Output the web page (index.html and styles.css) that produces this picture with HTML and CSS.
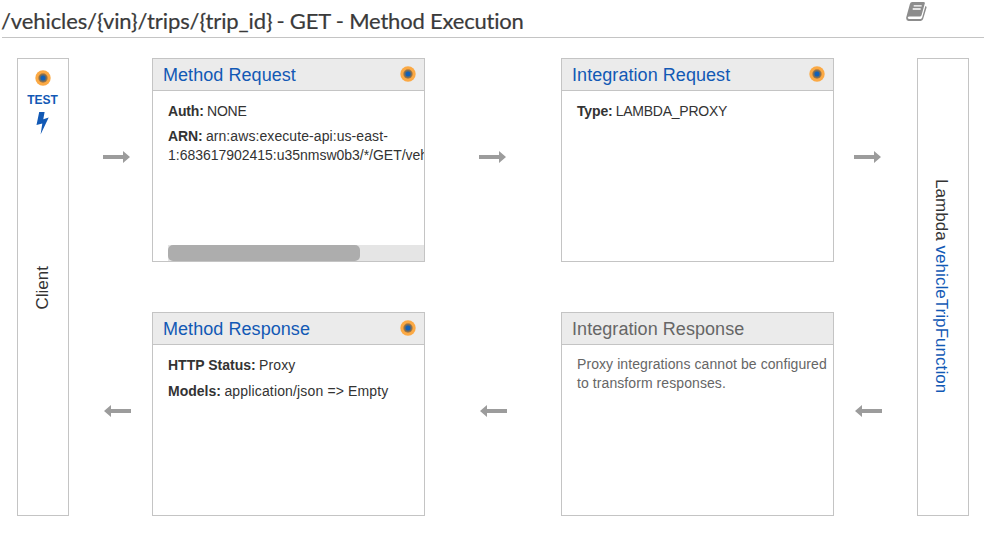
FILE: index.html
```html
<!DOCTYPE html>
<html lang="en">
<head>
<meta charset="utf-8">
<title>Method Execution</title>
<link rel="stylesheet" href="styles.css">
</head>
<body>
<svg width="0" height="0" class="defs">
  <symbol id="arrow" viewBox="0 0 28 12"><path d="M0 4h20V0l7 6-7 6V8H0z"/></symbol>
  <symbol id="dot" viewBox="0 0 16 16"><circle cx="8" cy="8" r="7.7" fill="#fba944"/><circle cx="8" cy="8" r="4.7" fill="#a97a43"/><circle cx="8" cy="8" r="3.7" fill="#6f6b60"/><circle cx="8" cy="8" r="2.5" fill="#1160b8"/></symbol>
</svg>
<header class="page-header">
  <h1><span class="path">/vehicles/{vin}/trips/{trip_id}</span><span class="verb"> - GET - Method Execution</span></h1>
  <svg class="book" viewBox="0 0 22 20"><path fill="#8c8c8c" d="M6.2 0h11.3q1.7 0 1.3 1.6L15.6 13q-.4 1.5-2 1.5H3.4q-1.5 0-1.7 1.2-.1 1.200 1.400 1.200h11.600q1 0 1.400-1.100L19.400 4q1.500.3 1.100 1.800l-3.400 11.300q-.5 1.800-2.400 1.800H2.600Q-.1 18.600.2 15.600L3.900 2.100Q4.400 0 6.200 0z"/><path d="M7.700 3.800h8M6.700 7h8" stroke="#fff" stroke-width="1.300"/></svg>
</header>
<main class="flow">
  <section class="endpoint client">
    <svg class="dot"><use href="#dot"/></svg>
    <a class="test">TEST</a>
    <svg class="bolt" viewBox="0 0 13 23"><path fill="#1259b5" d="M3.200 0H8.600L7.300 7.200 12.700 5.600 4.600 22.500 6.300 11.600.5 13z"/></svg>
    <span class="vertical up">Client</span>
  </section>
  <svg class="arrow c2"><use href="#arrow"/></svg>
  <article class="card c3">
    <h2><a>Method Request</a><svg class="dot"><use href="#dot"/></svg></h2>
    <div class="body">
      <p class="auth"><b>Auth:</b> NONE</p>
      <p class="arn"><b>ARN:</b> <span>arn:aws:execute-api:us-east-</span><br><span class="resource">1:683617902415:u35nmsw0b3/*/GET/vehicles/*/trips/*</span></p>
      <div class="track"><div class="thumb"></div></div>
    </div>
  </article>
  <svg class="arrow c4"><use href="#arrow"/></svg>
  <article class="card c5">
    <h2><a>Integration Request</a><svg class="dot"><use href="#dot"/></svg></h2>
    <div class="body"><p class="type"><b>Type:</b> <span>LAMBDA_PROXY</span></p></div>
  </article>
  <svg class="arrow c6"><use href="#arrow"/></svg>
  <section class="endpoint lambda"><span class="vertical">Lambda <a>vehicleTripFunction</a></span></section>
  <svg class="arrow back c2"><use href="#arrow"/></svg>
  <article class="card bottom c3">
    <h2><a>Method Response</a><svg class="dot"><use href="#dot"/></svg></h2>
    <div class="body"><p class="status"><b>HTTP Status:</b> Proxy</p><p class="models"><b>Models:</b> application/json =&gt; Empty</p></div>
  </article>
  <svg class="arrow back c4"><use href="#arrow"/></svg>
  <article class="card bottom c5 disabled">
    <h2><span>Integration Response</span></h2>
    <div class="body"><p class="note">Proxy integrations cannot be configured<br>to transform responses.</p></div>
  </article>
  <svg class="arrow back c6"><use href="#arrow"/></svg>
</main>
</body>
</html>
```
FILE: styles.css
```css
* { box-sizing: border-box; }
body { margin: 0; height: 539px; overflow: hidden; background: #fff; color: #333; font: 14px/19px "Liberation Sans", Arial, sans-serif; }
h1, h2, p { margin: 0; font-weight: 400; }
a { color: #1259b5; }
svg { display: block; }
.defs { position: absolute; }
.page-header { display: flex; justify-content: space-between; height: 38px; margin: 0 10px 20px 2px; padding: 2px 56px 0 0; border-bottom: 1px solid #c4c4c4; }
h1 { font: 22px/37px Lato, sans-serif; letter-spacing: -.2px; white-space: pre; color: #3a3a3a; -webkit-text-stroke: .2px #3a3a3a; margin-left: -1px; }
.path { letter-spacing: -.1px; margin-right: -1.500px; }
.book { width: 22px; height: 20px; }
.flow { display: grid; grid-template-columns: 52px 83px 273px 136px 273px 83px 52px; grid-template-rows: 204px 204px; row-gap: 50px; margin-left: 17px; }
.endpoint { grid-row: 1 / 3; display: flex; flex-direction: column; align-items: center; border: 1px solid #c4c4c4; font-size: 17px; }
.client { grid-column: 1; padding: 11px 1px 0 0; }
.lambda { grid-column: 7; padding: 120px 3px 0 0; letter-spacing: .05px; }
.dot { width: 16px; height: 16px; }
.test { font: bold 12px/16px "Liberation Sans", sans-serif; margin-top: 6px; }
.bolt { width: 13px; height: 23px; margin-top: 4px; }
.vertical { writing-mode: vertical-rl; white-space: nowrap; }
.up { transform: rotate(180deg); margin-top: 131px; }
.c2 { grid-column: 2; } .c3 { grid-column: 3; } .c4 { grid-column: 4; } .c5 { grid-column: 5; } .c6 { grid-column: 6; }
.arrow { grid-row: 1; width: 28px; height: 12px; fill: #9c9c9c; align-self: start; margin: 93px 0 0 34.4px; }
.arrow.c4 { margin-left: 54px; }
.arrow.c6 { margin-left: 20px; }
.arrow.back { grid-row: 2; transform: scaleX(-1); }
.card { grid-row: 1; border: 1px solid #c4c4c4; overflow: hidden; display: flex; flex-direction: column; }
.bottom { grid-row: 2; }
.card h2 { height: 32px; flex: none; display: flex; justify-content: space-between; padding: 0 8px 0 10px; border-bottom: 1px solid #c4c4c4; background: #ebebeb; font-size: 18px; line-height: 32px; letter-spacing: .06px; }
h2 .dot { margin-top: 7px; }
.body { flex: 1; display: flex; flex-direction: column; padding: 11px 0 0 15px; white-space: nowrap; letter-spacing: .08px; }
.body b { letter-spacing: -.15px; margin-right: -.5px; }
.body p + p { margin-top: 6px; }
.body .models { margin-top: 7px; letter-spacing: .15px; }
.resource { letter-spacing: -.02px; }
.auth { letter-spacing: -.2px; }
.type { letter-spacing: -.25px; }
.status b, .models b { letter-spacing: 0; }
.track { margin-top: auto; height: 16px; background: #e5e5e5; }
.thumb { width: 192px; height: 16px; border-radius: 5px; background: #adadad; }
.disabled { color: #666; }
.disabled .body { padding-top: 10px; }
```
